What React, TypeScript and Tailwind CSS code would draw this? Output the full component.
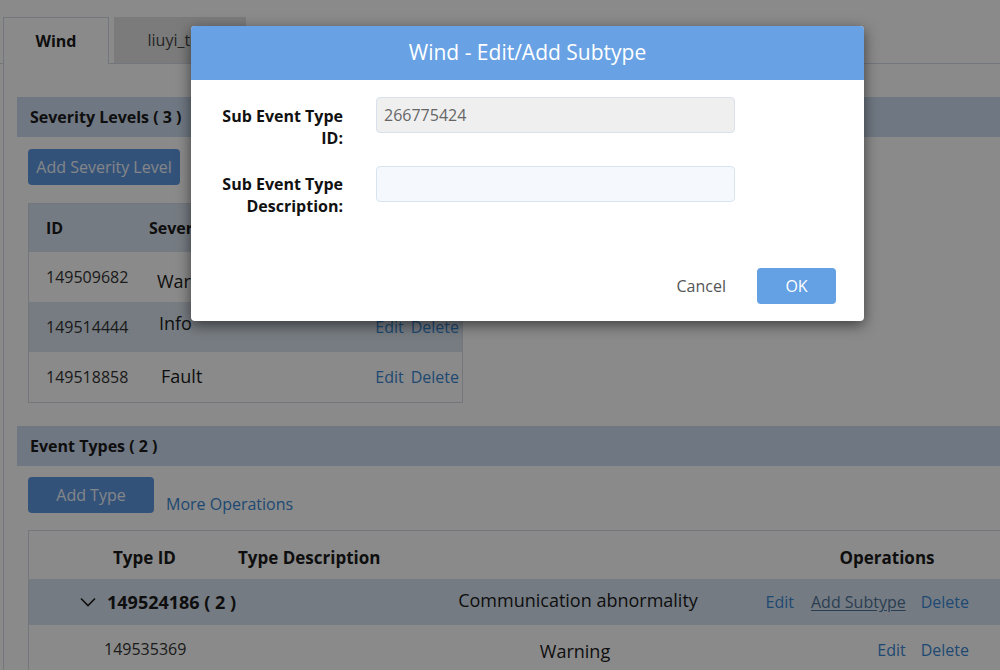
import React from 'react';

const LINK = 'text-[#3a88d2]';

function SectionHeader({ title }: { title: string }) {
  return (
    <div className="flex h-[40px] items-center bg-[#cedcf1] pl-[13px] text-[16px] font-bold text-[#1a1a1a]">
      {title}
    </div>
  );
}

function PrimaryButton({ label, width }: { label: string; width: string }) {
  return (
    <button
      type="button"
      className={`h-[36px] ${width} rounded-[4px] bg-[#5f98e2] text-[16px] text-[#f2f6fc]`}
    >
      {label}
    </button>
  );
}

const SEVERITIES = [
  { id: '149509682', name: 'Warning', nameClass: 'pl-[10px] pt-[9px]', bg: 'bg-white' },
  { id: '149514444', name: 'Info', nameClass: 'pl-[12px] pb-[7px]', bg: 'bg-[#dce6f1]' },
  { id: '149518858', name: 'Fault', nameClass: 'pl-[14px] pb-[1px]', bg: 'bg-white' },
];

function SeverityTable() {
  return (
    <div className="mt-[18px] w-[435px] border border-[#d4dce5]">
      <div className="flex h-[48px] items-center bg-[#d8e3f0] text-[16px] font-bold text-[#1a1a1a]">
        <div className="w-[120px] pl-[17px]">ID</div>
        <div>Severity</div>
      </div>
      {SEVERITIES.map((s) => (
        <div key={s.id} className={`flex h-[50px] items-center ${s.bg}`}>
          <div className="w-[118px] pl-[17px] text-[16px] text-[#333]">{s.id}</div>
          <div className={`flex-1 text-[18px] text-[#1a1a1a] ${s.nameClass}`}>{s.name}</div>
          <div className={`flex gap-[7px] pr-[3px] text-[16px] ${LINK}`}>
            <span>Edit</span>
            <span>Delete</span>
          </div>
        </div>
      ))}
    </div>
  );
}

function Chevron() {
  return (
    <svg width="16" height="10" viewBox="0 0 16 10" fill="none" className="shrink-0">
      <polyline points="1,1.5 8,8.5 15,1.5" stroke="#1a1a1a" strokeWidth="1.6" />
    </svg>
  );
}

function EventTable() {
  return (
    <div className="mt-[17px] w-[990px] border border-[#d4dce5]">
      <div className="flex h-[48px] items-center bg-white pt-[5px] text-[17px] font-bold text-[#1a1a1a]">
        <div className="w-[209px] pl-[84px]">Type ID</div>
        <div className="w-[569px]">Type Description</div>
        <div className="w-[160px] text-center">Operations</div>
      </div>
      <div className="flex h-[46px] items-center bg-[#d8e4f2]">
        <div className="flex w-[380px] items-center gap-[11px] pl-[51px] text-[18px] font-bold text-[#1a1a1a]">
          <Chevron />
          <span>149524186 ( 2 )</span>
        </div>
        <div className="w-[338px] pb-[4px] text-center text-[18px] text-[#1a1a1a]">
          Communication abnormality
        </div>
        <div className={`flex w-[222px] justify-end gap-[15px] text-[16px] ${LINK}`}>
          <span className="mr-[2px]">Edit</span>
          <span className="text-[#4f7397] underline underline-offset-2">Add Subtype</span>
          <span>Delete</span>
        </div>
      </div>
      <div className="flex h-[50px] items-center bg-white">
        <div className="w-[380px] pb-[2px] pl-[75px] text-[16px] text-[#333]">149535369</div>
        <div className="w-[332px] pt-[3px] text-center text-[18px] text-[#1a1a1a]">Warning</div>
        <div className={`flex w-[228px] justify-end gap-[15px] text-[16px] ${LINK}`}>
          <span>Edit</span>
          <span>Delete</span>
        </div>
      </div>
    </div>
  );
}

function SubtypeDialog() {
  return (
    <div className="absolute left-[191px] top-[26px] w-[673px] rounded-[4px] bg-white shadow-[0_4px_14px_rgba(0,0,0,0.55)]">
      <div className="flex h-[54px] items-center justify-center rounded-t-[4px] bg-[#68a2e4] text-[21px] font-medium text-white">
        Wind - Edit/Add Subtype
      </div>
      <div className="pt-[17px]">
        <div className="flex items-start">
          <label className="w-[152px] pt-[8px] text-right text-[16px] font-bold leading-[22px] text-[#111]">
            Sub Event Type
            <br />
            ID:
          </label>
          <input
            readOnly
            value="266775424"
            className="ml-[33px] h-[36px] w-[359px] rounded-[4px] border border-[#d9e2ec] bg-[#efefef] px-[7px] text-[16px] text-[#666] outline-none"
          />
        </div>
        <div className="mt-[17px] flex items-start">
          <label className="w-[152px] pt-[7px] text-right text-[16px] font-bold leading-[22px] text-[#111]">
            Sub Event Type
            <br />
            Description:
          </label>
          <input
            className="ml-[33px] h-[36px] w-[359px] rounded-[4px] border border-[#d7e3ef] bg-[#f5f9fd] px-[7px] text-[16px] outline-none"
          />
        </div>
      </div>
      <div className="mt-[51px] flex items-center justify-end gap-[31px] pb-[17px] pr-[28px]">
        <button type="button" className="text-[16px] text-[#555]">
          Cancel
        </button>
        <button
          type="button"
          className="h-[36px] w-[79px] rounded-[4px] bg-[#64a0e4] text-[16px] text-white"
        >
          OK
        </button>
      </div>
    </div>
  );
}

export default function App() {
  return (
    <div className="relative h-[670px] w-[1000px] overflow-hidden bg-white font-['Open_Sans',sans-serif] text-[#333]">
      <div className="w-[1020px] pt-[17px]">
        {/* Tabs */}
        <div className="flex items-end border-b border-[#d4dce5] pl-[3px]">
          <div className="-mb-px flex h-[47px] w-[106px] items-center justify-center border border-b-0 border-[#d4dce5] bg-white text-[16px] font-bold text-[#1a1a1a]">
            Wind
          </div>
          <div className="ml-[5px] flex h-[46px] w-[132px] items-center justify-center bg-[#e4e4e4] text-[16px] text-[#444]">
            liuyi_test
          </div>
        </div>

        {/* Panel */}
        <div className="ml-[3px] border-l border-[#d4dce5] pb-[40px] pl-[13px] pt-[33px]">
          <SectionHeader title="Severity Levels ( 3 )" />
          <div className="pl-[11px] pt-[12px]">
            <PrimaryButton label="Add Severity Level" width="w-[152px]" />
            <SeverityTable />
          </div>

          <div className="mt-[23px]">
            <SectionHeader title="Event Types ( 2 )" />
          </div>
          <div className="pl-[11px] pt-[11px]">
            <div className="flex h-[36px] items-start">
              <PrimaryButton label="Add Type" width="w-[126px]" />
              <span className={`ml-[12px] pt-[15px] text-[16px] ${LINK}`}>More Operations</span>
            </div>
            <EventTable />
          </div>
        </div>
      </div>

      {/* Modal backdrop */}
      <div className="absolute inset-0 bg-black/[0.46]" />
      <SubtypeDialog />
    </div>
  );
}
